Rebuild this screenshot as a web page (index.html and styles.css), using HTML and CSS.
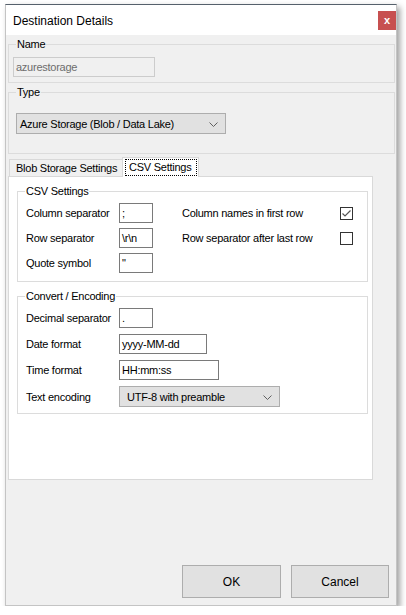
FILE: index.html
```html
<!DOCTYPE html>
<html>
<head>
<meta charset="utf-8">
<link rel="stylesheet" href="styles.css">
</head>
<body>
<div class="window">
  <div class="titlebar">
    <span class="title">Destination Details</span>
    <div class="close">x</div>
  </div>
  <div class="content">
    <fieldset class="group group-name">
      <legend>Name</legend>
      <div class="tb tb-disabled w-name">azurestorage</div>
    </fieldset>
    <fieldset class="group group-type">
      <legend>Type</legend>
      <div class="combo w-type"><span>Azure Storage (Blob / Data Lake)</span>
        <svg class="chev" width="9" height="5" viewBox="0 0 9 5"><path d="M0.5 0.5 L4.5 4.5 L8.5 0.5" fill="none" stroke="#606060" stroke-width="1"/></svg>
      </div>
    </fieldset>
    <div class="tabs">
      <div class="tab">Blob Storage Settings</div>
      <div class="tab tab-active"><span class="focus">CSV Settings</span></div>
    </div>
    <div class="panel">
      <fieldset class="group group-csv">
        <legend>CSV Settings</legend>
        <div class="grid grid-csv">
          <span class="lbl">Column separator</span>
          <div class="tb w-small">;</div>
          <span class="lbl lbl2">Column names in first row</span>
          <div class="chk"><svg width="11" height="11" viewBox="0 0 11 11"><path d="M1.5 5.5 L4 8 L9.5 2.5" fill="none" stroke="#555" stroke-width="1.2"/></svg></div>
          <span class="lbl">Row separator</span>
          <div class="tb w-small">\r\n</div>
          <span class="lbl lbl2">Row separator after last row</span>
          <div class="chk"></div>
          <span class="lbl">Quote symbol</span>
          <div class="tb w-small">"</div>
        </div>
      </fieldset>
      <fieldset class="group group-conv">
        <legend>Convert / Encoding</legend>
        <div class="grid grid-conv">
          <span class="lbl">Decimal separator</span>
          <div class="tb w-small">.</div>
          <span class="lbl">Date format</span>
          <div class="tb w-date">yyyy-MM-dd</div>
          <span class="lbl">Time format</span>
          <div class="tb w-time">HH:mm:ss</div>
          <span class="lbl">Text encoding</span>
          <div class="combo w-enc"><span>UTF-8 with preamble</span>
            <svg class="chev" width="9" height="5" viewBox="0 0 9 5"><path d="M0.5 0.5 L4.5 4.5 L8.5 0.5" fill="none" stroke="#606060" stroke-width="1"/></svg>
          </div>
        </div>
      </fieldset>
    </div>
    <div class="buttons">
      <div class="btn btn-ok">OK</div>
      <div class="btn btn-cancel">Cancel</div>
    </div>
  </div>
</div>
</body>
</html>
```
FILE: styles.css
```css
* { box-sizing: border-box; }
html, body { margin: 0; padding: 0; background: #ffffff; }
body {
  font-family: "Liberation Sans", Arial, sans-serif;
  font-size: 11px;
  letter-spacing: -0.25px;
  color: #000;
}
.window {
  margin: 4px 0 0 5px;
  width: 392px;
  height: 602px;
  background: #f0f0f0;
  border: 1px solid #c4c4c4;
  border-top-color: #56616c;
  box-shadow: 3px 3px 6px rgba(0,0,0,0.38);
  display: flex;
  flex-direction: column;
}
.titlebar {
  height: 30px;
  background: #ffffff;
  display: flex;
  align-items: center;
  justify-content: space-between;
  flex: none;
}
.title {
  font-size: 12px;
  letter-spacing: 0;
  margin-left: 7px;
  margin-top: 1px;
}
.close {
  width: 18px;
  height: 19px;
  margin-top: 1px;
  background: #c75050;
  color: #fff;
  font-weight: bold;
  font-size: 11px;
  letter-spacing: 0;
  display: flex;
  align-items: center;
  justify-content: center;
  padding-bottom: 2px;
}
.content {
  flex: 1;
  display: flex;
  flex-direction: column;
  padding: 0 1px 0 2px;
}
.group {
  margin: 0;
  padding: 0;
  border: 1px solid #dcdcdc;
  min-width: 0;
}
.group legend {
  margin-left: 7px;
  padding: 0 1px;
  line-height: 14px;
  height: 14px;
}
.group-name { margin-top: 2px; padding-bottom: 5px; }
.group-name .tb { margin: 6px 0 0 4px; }
.group-type { margin-top: 2px; padding-bottom: 19px; }
.group-type .combo { margin: 14px 0 0 7px; }
.tb {
  height: 20px;
  border: 1px solid #7a7a7a;
  background: #fff;
  padding-left: 2px;
  line-height: 18px;
  white-space: nowrap;
}
.tb-disabled {
  border-color: #cccccc;
  background: #f0f0f0;
  color: #6d6d6d;
}
.w-name { width: 142px; }
.w-small { width: 34px; }
.w-date { width: 88px; }
.w-time { width: 100px; }
.combo {
  height: 21px;
  border: 1px solid #adadad;
  background: #e1e1e1;
  display: flex;
  align-items: center;
  justify-content: space-between;
  padding: 0 7px 0 3px;
}
.w-type { width: 210px; }
.w-enc { width: 161px; padding-left: 7px; }
.chev { flex: none; margin-top: 1px; }

.tabs {
  display: flex;
  align-items: flex-end;
  height: 21px;
  margin-top: 1px;
  position: relative;
  z-index: 1;
}
.tab {
  height: 17px;
  border: 1px solid #d9d9d9;
  border-bottom: none;
  background: #f0f0f0;
  padding: 0 0 0 6px;
  width: 114px;
  margin-left: 1px;
  line-height: 16px;
  white-space: nowrap;
}
.tab-active {
  height: 20px;
  width: 77px;
  background: #fff;
  margin-left: -1px;
  margin-bottom: -1px;
  padding: 1px 1px 0 2px;
}
.focus {
  display: block;
  height: 17px;
  width: 72px;
  border: 1px dotted #000;
  line-height: 15px;
  padding-left: 3px;
}
.panel {
  width: 365px;
  height: 304px;
  background: #fff;
  border: 1px solid #d9d9d9;
  padding: 0 4px 0 8px;
}
.group-csv { margin-top: 7px; padding-bottom: 8px; }
.group-conv { margin-top: 7px; padding-bottom: 6px; }
.grid {
  display: grid;
  align-items: center;
  margin: 5px 0 0 8px;
}
.grid-csv {
  grid-template-columns: 93px 34px 29px 158px 13px;
  grid-template-rows: 20px 20px 20px;
  row-gap: 5px;
}
.grid-csv .lbl2 { grid-column: 4; }
.grid-csv .tb { grid-column: 2; }
.grid-csv .lbl:not(.lbl2) { grid-column: 1; }
.grid-csv .chk { grid-column: 5; }
.grid-conv {
  grid-template-columns: 93px auto;
  grid-template-rows: 20px 20px 20px 21px;
  row-gap: 6px;
  justify-items: start;
}
.lbl { white-space: nowrap; }
.chk {
  width: 13px;
  height: 13px;
  border: 1px solid #333;
  background: #fff;
  display: flex;
  align-items: center;
  justify-content: center;
}
.buttons {
  margin-top: auto;
  display: flex;
  justify-content: flex-end;
  gap: 10px;
  padding: 0 6px 7px 0;
}
.btn {
  height: 33px;
  border: 1px solid #adadad;
  background: #e1e1e1;
  display: flex;
  align-items: center;
  justify-content: center;
  letter-spacing: 0;
  font-size: 12px;
}
.btn-ok { width: 99px; }
.btn-cancel { width: 98px; }
```
